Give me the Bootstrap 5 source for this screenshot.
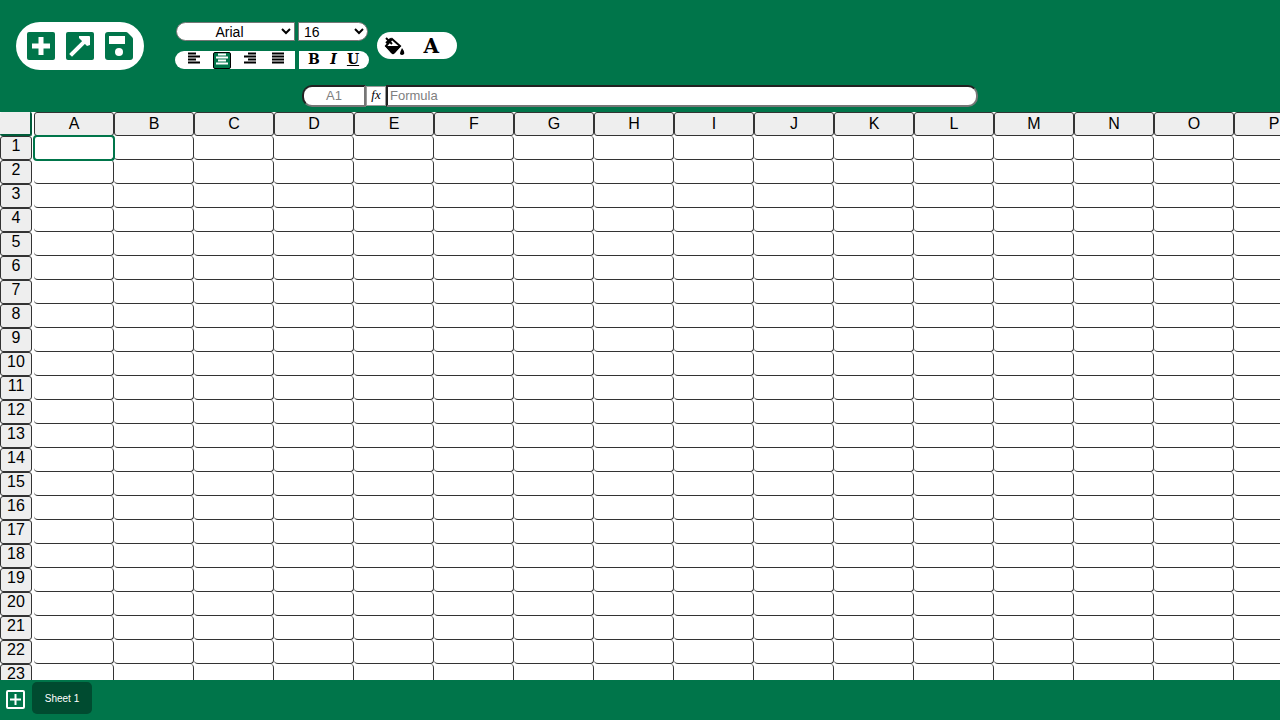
<!DOCTYPE html>
<html lang="en">
<head>
<meta charset="utf-8">
<meta name="viewport" content="width=device-width, initial-scale=1">
<title>Spreadsheet</title>
<link href="https://cdn.jsdelivr.net/npm/bootstrap@5.3.0/dist/css/bootstrap.min.css" rel="stylesheet">
<style>
:root { --sheet-green: #00754a; --line: #333; }
body { font-family: "Liberation Sans", Arial, sans-serif; font-size: 16px; color: #000; }
button { color: inherit; }
.tool-area, .sheet-bar { background: var(--sheet-green); }
.tool-area { height: 112px; padding: 22px 16px 0; }
.tool-row { height: 48px; }
.icon-btn { border: 0; padding: 0; background: none; display: flex; align-items: center; justify-content: center; line-height: 1; }
.icon-btn svg { display: block; }
.file-pill { height: 48px; padding: 0 11px; gap: 11px; color: var(--sheet-green); }
.format-block { margin-left: 31px; width: 194px; gap: 10px; }
.format-block select { height: 19px; font-size: 14px; line-height: 16px; padding: 0; border: 1px solid #767676; background: #fff; color: #000; }
.family-select { width: 119px; margin-left: 1px; text-align: center; border-radius: 10px 0 0 10px; }
.format-block .size-select { width: 70px; margin-right: 1px; padding-left: 1px; border-radius: 0 10px 10px 0; }
.align-group { width: 120px; height: 18px; padding: 1px 0 0 10px; gap: 10px; border-radius: 10px 0 0 10px; }
.style-group { width: 70px; height: 18px; padding: 0 8px 0 7px; border-radius: 0 10px 10px 0; font: bold 14px/14px "DejaVu Serif", serif; }
.align-group .icon-btn { width: 18px; height: 17px; align-items: flex-start; }
.align-group .icon-btn.active { background: var(--sheet-green); color: #fff; border: 1px solid #000; border-radius: 2px; }
.style-group .icon-btn { font: inherit; width: 16px; height: 15px; }
.color-pill { width: 80px; height: 27px; margin: 10px 0 0 8px; padding: 0 18px 0 7px; }
.letter-btn { font: bold 20px/20px "DejaVu Serif", serif; }
.formula-row { margin-top: 15px; height: 22px; }
.formula-row input { height: 22px; font-size: 13px; border: 2px inset #767676; padding: 0 2px 2px; min-width: 0; background: #fff; }
.formula-row input::placeholder { color: #808080; opacity: 1; }
.name-input { width: 64px; text-align: center; border-radius: 10px 0 0 10px; }
.fx-label { width: 20px; height: 20px; background: #fff; border: 1px solid #999; font: italic 13px/16px "Liberation Serif", serif; text-align: center; }
.formula-input { width: 592px; border-radius: 0 10px 10px 0; }
.sheet-view { min-height: 0; }
.sheet-table { table-layout: fixed; width: 1314px; border-collapse: separate; border-spacing: 0; }
.sheet-table th { font-weight: 400; text-align: center; padding: 0; height: 24px; line-height: 22px; }
.sheet-table td { padding: 0; height: 24px; border: solid var(--line); border-width: 0 1px 1px 0; border-radius: 4px; }
.sheet-table thead th:not(.corner-head) { background: #eee; border: 1px solid var(--line); border-radius: 3px; }
.head-col { width: 34px; }
.data-col { width: 80px; }
.row-label { width: 32px; height: 24px; line-height: 18px; background: #eee; border: 1px solid var(--line); border-radius: 3px; }
.corner-box { width: 32px; height: 24px; background: #eee; border: solid #005c3a; border-width: 0 2px 2px 0; border-radius: 2px; }
.sheet-table td.selected { position: relative; z-index: 1; outline: 2px solid var(--sheet-green); outline-offset: -1px; border-radius: 3px; }
.sheet-bar { height: 40px; padding: 2px 6px 0; gap: 7px; color: #fff; }
.add-btn { height: 35px; }
.sheet-tab { width: 60px; height: 32px; border: 0; border-radius: 5px; background: #004b30; color: #fff; font-size: 10px; }
</style>
<script src="https://cdn.jsdelivr.net/npm/bootstrap@5.3.0/dist/js/bootstrap.bundle.min.js"></script>
</head>
<body class="vh-100 d-flex flex-column overflow-hidden">
<header class="tool-area flex-shrink-0">
  <div class="tool-row d-flex align-items-start">
    <div class="file-pill d-flex align-items-center bg-white rounded-pill">
      <button class="icon-btn" type="button" aria-label="New"><svg width="28" height="28" viewBox="0 0 28 28"><rect width="28" height="28" rx="2" fill="currentColor"/><path d="M14 5v18M5 14h18" stroke="#fff" stroke-width="5"/></svg></button>
      <button class="icon-btn" type="button" aria-label="Open"><svg width="28" height="28" viewBox="0 0 28 28"><rect width="28" height="28" rx="2" fill="currentColor"/><path d="M6 22 20 8" stroke="#fff" stroke-width="4" stroke-linecap="square"/><path d="M13 4h10q1 0 1 1v8l-3 1-8-8z" fill="#fff"/></svg></button>
      <button class="icon-btn" type="button" aria-label="Save"><svg width="28" height="28" viewBox="0 0 28 28"><path d="M3 0h18q1 0 2 1l4 4q1 1 1 2v18q0 3-3 3H3q-3 0-3-3V3q0-3 3-3z" fill="currentColor"/><path d="M4 4h16v8H4z" fill="#fff"/><circle cx="14" cy="20" r="4" fill="#fff"/></svg></button>
    </div>
    <div class="format-block d-flex flex-column">
      <div class="d-flex justify-content-between">
        <select class="family-select" aria-label="Font family"><option>Arial</option><option>Courier New</option><option>Times New Roman</option></select>
        <select class="size-select" aria-label="Font size"><option>16</option><option>18</option><option>20</option></select>
      </div>
      <div class="d-flex justify-content-between">
        <div class="align-group bg-white d-flex">
          <button class="icon-btn" type="button" aria-label="Align left"><svg width="12" height="12" viewBox="0 0 12 12" stroke="currentColor" stroke-width="1.800"><path d="M0 1.500h8M0 4.500h12M0 7.500h8M0 10.500h12"/></svg></button>
          <button class="icon-btn active" type="button" aria-label="Align center"><svg width="12" height="12" viewBox="0 0 12 12" stroke="currentColor" stroke-width="1.800"><path d="M2 1.500h8M0 4.500h12M2 7.500h8M0 10.500h12"/></svg></button>
          <button class="icon-btn" type="button" aria-label="Align right"><svg width="12" height="12" viewBox="0 0 12 12" stroke="currentColor" stroke-width="1.800"><path d="M4 1.500h8M0 4.500h12M4 7.500h8M0 10.500h12"/></svg></button>
          <button class="icon-btn" type="button" aria-label="Justify"><svg width="12" height="12" viewBox="0 0 12 12" stroke="currentColor" stroke-width="1.800"><path d="M0 1.500h12M0 4.500h12M0 7.500h12M0 10.500h12"/></svg></button>
        </div>
        <div class="style-group bg-white d-flex justify-content-between">
          <button class="icon-btn" type="button">B</button>
          <button class="icon-btn fst-italic" type="button">I</button>
          <button class="icon-btn text-decoration-underline" type="button">U</button>
        </div>
      </div>
    </div>
    <div class="color-pill d-flex align-items-center justify-content-between bg-white rounded-pill">
      <button class="icon-btn" type="button" aria-label="Fill color"><svg width="21" height="18" viewBox="0 0 21 18"><path d="M2 1l6 6M2 6l5-4.500M8 2l8 7-7 7-7-7z" fill="none" stroke="#000" stroke-width="2"/><path d="M1 9h16l-6 7q-2 2-4 0z"/><path d="M18 11q3 4 2 6-2 2-4 0 0-2 2-6z"/></svg></button>
      <button class="icon-btn letter-btn" type="button">A</button>
    </div>
  </div>
  <div class="formula-row d-flex align-items-center justify-content-center">
    <input class="name-input" type="text" placeholder="A1" aria-label="Cell">
    <label class="fx-label" for="formula">fx</label>
    <input class="formula-input" id="formula" type="text" placeholder="Formula">
  </div>
</header>
<main class="sheet-view flex-fill overflow-hidden bg-white">
  <table class="sheet-table">
    <colgroup><col class="head-col"></colgroup>
    <thead><tr><th class="corner-head" aria-label="Select all"><div class="corner-box"></div></th></tr></thead>
    <tbody></tbody>
  </table>
</main>
<footer class="sheet-bar d-flex flex-shrink-0 align-items-start">
  <button class="icon-btn add-btn" type="button" aria-label="Add sheet"><svg width="19" height="19" viewBox="0 0 19 19" fill="none" stroke="currentColor" stroke-width="2"><rect x="1" y="1" width="17" height="17" rx="1"/><path d="M9.500 4v11M4 9.500h11"/></svg></button>
  <button class="sheet-tab" type="button">Sheet 1</button>
</footer>
<script>
const letters = "ABCDEFGHIJKLMNOP";
const headRow = document.querySelector(".sheet-table thead tr");
const columns = document.querySelector(".sheet-table colgroup");
const body = document.querySelector(".sheet-table tbody");
for (const letter of letters) {
  columns.insertAdjacentHTML("beforeend", '<col class="data-col">');
  headRow.insertAdjacentHTML("beforeend", `<th scope="col">${letter}</th>`);
}
for (let n = 1; n <= 23; n++) {
  body.insertAdjacentHTML("beforeend", `<tr><th scope="row"><div class="row-label">${n}</div></th>${"<td></td>".repeat(letters.length)}</tr>`);
}
body.querySelector("td").classList.add("selected");
</script>
</body>
</html>
